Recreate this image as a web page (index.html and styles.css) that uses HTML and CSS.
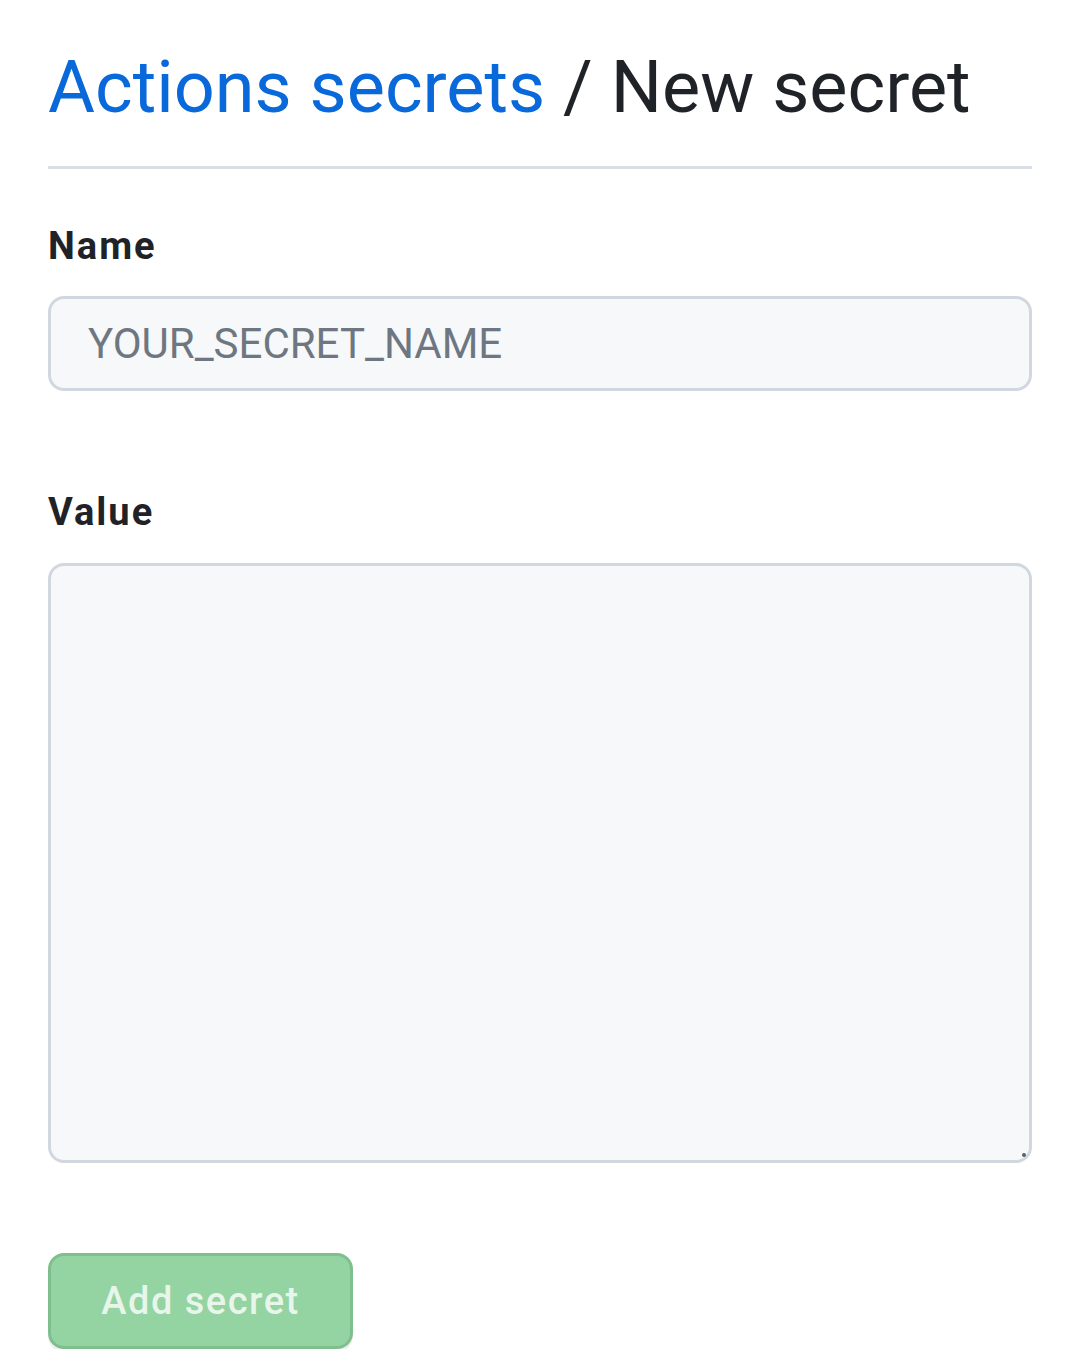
FILE: index.html
```html
<!DOCTYPE html>
<html lang="en">
<head>
<meta charset="utf-8">
<title>Actions secrets / New secret</title>
<link rel="stylesheet" href="styles.css">
</head>
<body>
<main class="page">
  <h1 class="subhead"><a class="crumb" href="#">Actions secrets</a> / New secret</h1>
  <form class="form">
    <div class="field">
      <label class="label" for="name">Name</label>
      <input class="input" id="name" type="text" placeholder="YOUR_SECRET_NAME">
    </div>
    <div class="field field-value">
      <label class="label" for="value">Value</label>
      <div class="textarea-wrap">
        <textarea class="textarea" id="value"></textarea>
        <span class="grip"></span>
      </div>
    </div>
    <button class="btn" type="button" disabled>Add secret</button>
  </form>
</main>
</body>
</html>
```
FILE: styles.css
```css
* { box-sizing: border-box; }
html, body { margin: 0; padding: 0; background: #ffffff; }
body {
  font-family: Roboto, "Noto Sans", sans-serif;
  color: #1f2328;
}
.page {
  padding: 42px 48px 0 48px;
}
.subhead {
  margin: 0;
  font-size: 72px;
  font-weight: 400;
  line-height: 91px;
  color: #1f2328;
  padding-bottom: 33px;
  border-bottom: 3px solid #d8dee4;
}
.crumb {
  color: #0969da;
  text-decoration: none;
}
.form {
  display: flex;
  flex-direction: column;
}
.field {
  display: flex;
  flex-direction: column;
}
.label {
  font-size: 38px;
  font-weight: 700;
  letter-spacing: 2px;
  line-height: 46px;
  margin-top: 54px;
  margin-bottom: 27px;
  color: #1f2328;
}
.field-value .label {
  margin-top: 98px;
  margin-bottom: 28px;
}
.input {
  display: block;
  width: 100%;
  height: 95px;
  padding: 0 37px;
  font-family: Roboto, "Noto Sans", sans-serif;
  font-size: 42px;
  color: #1f2328;
  background: #f6f8fa;
  border: 3px solid #d0d7de;
  border-radius: 16px;
  outline: none;
}
.input::placeholder { color: #6e7781; }
.textarea-wrap {
  position: relative;
}
.textarea {
  display: block;
  width: 100%;
  height: 600px;
  resize: none;
  background: #f6f8fa;
  border: 3px solid #d0d7de;
  border-radius: 16px;
  outline: none;
  font-family: Roboto, "Noto Sans", sans-serif;
  font-size: 42px;
  padding: 20px 37px;
}
.grip {
  position: absolute;
  right: 6px;
  bottom: 6px;
  width: 4px;
  height: 4px;
  border-radius: 50%;
  background: #57606a;
}
.btn {
  align-self: flex-start;
  margin-top: 90px;
  width: 305px;
  height: 96px;
  font-family: Roboto, "Noto Sans", sans-serif;
  font-size: 38px;
  font-weight: 500;
  letter-spacing: 1.5px;
  color: rgba(255, 255, 255, 0.8);
  background: #94d3a2;
  border: 3px solid #7fbf8e;
  border-radius: 16px;
  box-shadow: 0 3px 0 rgba(31, 35, 40, 0.08);
  padding: 0;
  cursor: default;
}
```
